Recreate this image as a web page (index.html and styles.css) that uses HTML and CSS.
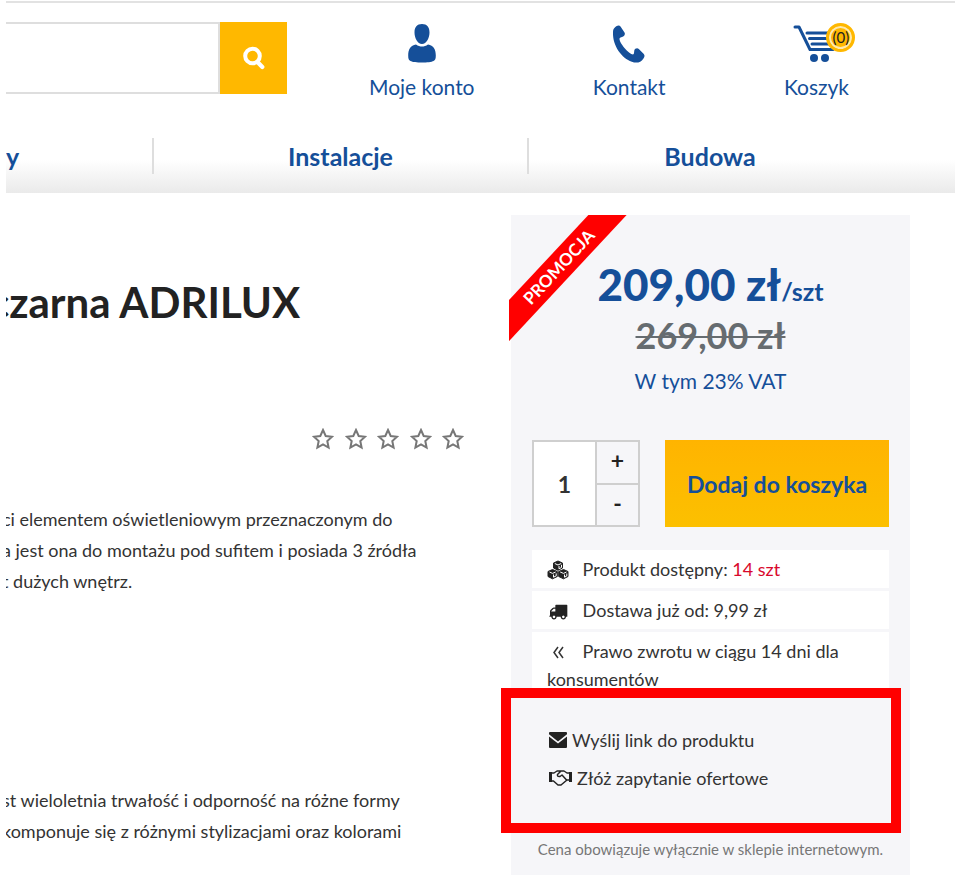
FILE: index.html
```html
<!DOCTYPE html>
<html lang="pl">
<head>
    <meta charset="UTF-8">
    <meta name="viewport" content="width=device-width, initial-scale=1">
    <title>ADRILUX</title>
    <link rel="stylesheet" href="styles.css">
</head>
<body>
<div class="page">
    <header class="header">
        <form class="search">
            <input class="search-input" type="text" aria-label="Szukaj">
            <button class="search-btn" type="button" aria-label="Szukaj">
                <svg viewBox="0 0 22 24" width="22" height="24"><circle cx="9.5" cy="10" r="7.3" fill="none" stroke="#fff" stroke-width="4"/><path d="M14.5 16l4.8 5" stroke="#fff" stroke-width="4.2" stroke-linecap="round"/></svg>
            </button>
        </form>
        <nav class="user-menu">
            <a href="#" class="user-link">
                <svg class="user-icon" viewBox="0 0 40 40" width="40" height="40"><path fill="#154f99" d="M20 0c5 0 7.500 3 7.500 8.500S24.500 20 20 20s-7.500-6-7.500-11.500S15 0 20 0zM14 20.500c2 1.400 4 2 6 2s4-.6 6-2c5.500.8 7.800 5 7.800 11 0 3.500-.6 4.700-2.300 5.500-3.500 2-19.500 2-23 0-1.700-.8-2.300-2-2.300-5.500 0-6 2.300-10.200 7.800-11z"/></svg>
                Moje konto
            </a>
            <a href="#" class="user-link">
                <svg class="user-icon" viewBox="0 0 40 40" width="40" height="40"><path fill="#154f99" d="M5 4.500C7 2 10 .5 11.500 2.500l4 6c.8 1.200.3 2.500-.6 3.500-1.400 1.400-4.200 1.200-4.400 2.500-.6 4 9.500 16 13.500 16 1.300 0 1-2.500 1.300-4 .4-2 3-3 4.500-1.500l5 5c1.300 1.500.7 3-.5 4.700-2.500 4-7 4.800-11.500 3C13 34.500 3.500 22 4 8.500c0-1.600.2-3 1-4z"/></svg>
                Kontakt
            </a>
            <a href="#" class="user-link">
                <svg class="user-icon" viewBox="0 0 40 40" width="40" height="40"><g fill="none" stroke="#154f99" stroke-width="3" stroke-linecap="round" stroke-linejoin="round"><path d="M-1 3h4l11 22.500h23M11 9h29M13.500 14.500h26M16 20h22"/></g><circle cx="18" cy="34" r="4" fill="#154f99"/><circle cx="29" cy="34" r="4" fill="#154f99"/></svg>
                Koszyk
                <span class="badge">(0)</span>
            </a>
        </nav>
    </header>

    <nav class="nav">
        <a href="#" class="nav-link nav-link-first">y</a>
        <a href="#" class="nav-link">Instalacje</a>
        <a href="#" class="nav-link">Budowa</a>
    </nav>

    <main class="product">
        <section class="info">
            <h1 class="title">czarna ADRILUX</h1>
            <div class="rating" role="img" aria-label="0 / 5">
                <svg class="star" viewBox="0 0 22 22"><path d="M11 2l2.700 6 6.300.7-4.700 4.300 1.300 6.500-5.600-3.200-5.600 3.200 1.300-6.500L2 8.700 8.300 8z"/></svg>
                <svg class="star" viewBox="0 0 22 22"><path d="M11 2l2.700 6 6.300.7-4.700 4.300 1.300 6.500-5.600-3.200-5.600 3.200 1.300-6.500L2 8.700 8.300 8z"/></svg>
                <svg class="star" viewBox="0 0 22 22"><path d="M11 2l2.700 6 6.300.7-4.700 4.300 1.300 6.500-5.600-3.200-5.600 3.200 1.300-6.500L2 8.700 8.300 8z"/></svg>
                <svg class="star" viewBox="0 0 22 22"><path d="M11 2l2.700 6 6.300.7-4.700 4.300 1.300 6.500-5.600-3.200-5.600 3.200 1.300-6.500L2 8.700 8.300 8z"/></svg>
                <svg class="star" viewBox="0 0 22 22"><path d="M11 2l2.700 6 6.300.7-4.700 4.300 1.300 6.500-5.600-3.200-5.600 3.200 1.300-6.500L2 8.700 8.300 8z"/></svg>
            </div>
            <p class="desc">ci elementem oświetleniowym przeznaczonym do<br>a jest ona do montażu pod sufitem i posiada 3 źródła<br>t dużych wnętrz.</p>
            <p class="desc">st wieloletnia trwałość i odporność na różne formy<br>komponuje się z różnymi stylizacjami oraz kolorami</p>
        </section>

        <aside class="buy">
            <div class="ribbon"><span class="ribbon-text">PROMOCJA</span></div>
            <div class="price">209,00 zł<span class="price-unit">/szt</span></div>
            <del class="price-old">269,00 zł</del>
            <div class="vat">W tym 23% VAT</div>

            <form class="cart">
                <div class="qty">
                    <input class="qty-input" type="text" value="1" aria-label="Ilość">
                    <div class="qty-btns">
                        <button class="qty-btn" type="button">+</button>
                        <button class="qty-btn" type="button">-</button>
                    </div>
                </div>
                <button class="cart-btn" type="button">Dodaj do koszyka</button>
            </form>

            <ul class="facts">
                <li class="fact">
                    <svg class="fact-icon" viewBox="0 0 22 20" width="22" height="20"><g fill="#222" stroke="#222" stroke-linejoin="round"><path d="M11 1l4.500 2v5L11 10.300 6.500 8V3zM5.500 9.500l4.800 2v5l-4.800 2.300L1 16.500v-5zM16.500 9.500l4.500 2v5l-4.500 2.300-4.800-2.300v-5z"/></g><g fill="none" stroke="#fff"><path d="M7.800 3.500L11 5l3.200-1.500M12 6v2.800l2.500-1.300V4.800M2.500 12l3 1.400L8.700 12M6.500 14.500v2.700l2.700-1.300v-2.500M13.200 12l3.300 1.400 3-1.400M17.500 14.500v2.700l2.300-1.200v-2.500"/></g></svg>
                    Produkt dostępny: <span class="stock">14 szt</span>
                </li>
                <li class="fact">
                    <svg class="fact-icon" viewBox="0 0 2112 1792" width="22" height="19"><path transform="translate(160 0)" fill="#222" d="M640 1408q0-52-38-90t-90-38-90 38-38 90 38 90 90 38 90-38 38-90zm-384-512h384v-256h-158q-13 0-22 9l-195 195q-9 9-9 22v30zm1280 512q0-52-38-90t-90-38-90 38-38 90 38 90 90 38 90-38 38-90zm256-1088v1024q0 15-4 26.500t-13.500 18.500-16.500 11.500-23.500 6-22.500 2-25.500 0-22.500-.5q0 106-75 181t-181 75-181-75-75-181h-384q0 106-75 181t-181 75-181-75-75-181h-64q-3 0-22.500.5t-25.500 0-22.500-2-23.500-6-16.500-11.500-13.500-18.500-4-26.500q0-26 19-45t45-19v-320q0-8-.5-35t0-38 2.500-34.500 6.500-37 14-30.500 22.500-30l198-198q19-19 50.500-32t58.500-13h160v-192q0-26 19-45t45-19h1024q26 0 45 19t19 45z"/></svg>
                    Dostawa już od: 9,99 zł
                </li>
                <li class="fact">
                    <svg class="fact-icon" viewBox="0 0 22 20" width="22" height="20"><path d="M11 5l-4 5.500 4 5.500M16 5l-4 5.500 4 5.500" fill="none" stroke="#333" stroke-width="1.500"/></svg>
                    Prawo zwrotu w ciągu 14 dni dla konsumentów
                </li>
            </ul>

            <div class="actions">
                <a href="#" class="action">
                    <svg viewBox="0 0 18 16" width="18" height="16"><path fill="#222" d="M1 0h16q1 0 1 1v1.200L9 9.500 0 2.200V1q0-1 1-1zM0 4.500l9 7 9-7V15q0 1-1 1H1q-1 0-1-1z"/></svg>
                    Wyślij link do produktu
                </a>
                <a href="#" class="action">
                    <svg viewBox="0 0 23 18" width="23" height="18"><path fill="#222" d="M0 3h3v10H0zM20 3h3v10h-3z"/><path fill="none" stroke="#222" stroke-width="1.500" stroke-linejoin="round" d="M3 4h2l3-2h4M3 12h1.500l4.500 4h3l6-5h2M20 4h-2l-3-2h-3L8.500 5.500Q8 8 11 7.500L13 6l5 5.500"/></svg>
                    Złóż zapytanie ofertowe
                </a>
            </div>
            <p class="note">Cena obowiązuje wyłącznie w sklepie internetowym.</p>
        </aside>
    </main>
</div>
</body>
</html>
```
FILE: styles.css
```css
* {
    box-sizing: border-box;
}
body {
    margin: 0;
    background: #fff;
    color: #333;
    font-family: Lato, "Liberation Sans", sans-serif;
    font-size: 18px;
}
a {
    color: inherit;
    text-decoration: none;
}
button,
input {
    margin: 0;
    border-radius: 0;
    font-family: inherit;
}
.page {
    margin: 1px 0 0 6px;
    border-top: 2px solid #e2e2e2;
    overflow: hidden;
}

/* header */
.header {
    display: flex;
    padding-top: 19px;
}
.search {
    display: flex;
    flex: 0 0 281px;
    min-width: 0;
    height: 72px;
}
.search-input {
    flex: 1;
    width: 0;
    min-width: 0;
    border: 2px solid #dedede;
    border-left: 0;
    padding: 0 16px;
    font-size: 18px;
}
.search-btn {
    display: flex;
    flex: 0 0 67px;
    align-items: center;
    justify-content: center;
    border: 0;
    padding: 0;
    background: #ffb800;
}
.user-menu {
    display: flex;
    flex: 1;
    justify-content: space-between;
    padding: 2px 106px 0 82px;
}
.user-link {
    display: flex;
    position: relative;
    flex-direction: column;
    align-items: center;
    color: #154f99;
    font-size: 21px;
    line-height: 28px;
}
.user-icon {
    margin-bottom: 9px;
    overflow: visible;
}
.badge {
    position: absolute;
    top: -1px;
    left: 50%;
    width: 29px;
    height: 29px;
    margin-left: 10px;
    border: 3px solid #ffb800;
    border-radius: 50%;
    background: #ffb800;
    box-shadow: inset 0 0 0 2px #ffe9ae;
    color: #222;
    font-size: 15px;
    line-height: 23px;
    text-align: center;
}

/* navigation */
.nav {
    display: grid;
    grid-template-columns: 148fr 375fr 362fr 64fr;
    margin-top: 18px;
    padding: 19px 0;
    background: linear-gradient(#fff 55%, #eaeaea);
}
.nav-link {
    border-right: 2px solid #dedede;
    color: #154f99;
    font-size: 25px;
    font-weight: bold;
    line-height: 36px;
    text-align: center;
}
.nav-link-first {
    text-align: left;
}
.nav-link:last-child {
    border-right: 0;
}

/* product */
.product {
    display: grid;
    grid-template-columns: 1fr 399px;
    padding: 22px 45px 0 0;
}
.title {
    margin: 59px 0 98px -17px;
    color: #222;
    font-size: 42px;
    font-weight: bold;
    line-height: 56px;
}
.rating {
    display: flex;
    justify-content: space-between;
    width: 152px;
    margin: 0 47px 54px auto;
}
.star {
    width: 22px;
    height: 22px;
    fill: none;
    stroke: #777;
    stroke-width: 2;
}
.desc {
    margin: 0 0 188px -4px;
    line-height: 31px;
    white-space: nowrap;
}
.desc:last-child {
    margin-bottom: 0;
}
.buy {
    position: relative;
    padding: 42px 21px 16px;
    background: #f6f6f9;
    text-align: center;
}
.ribbon {
    position: absolute;
    top: 0;
    left: -2px;
    width: 118px;
    height: 126px;
    overflow: hidden;
}
.ribbon-text {
    position: absolute;
    top: 38px;
    left: -50px;
    width: 200px;
    background: #f00;
    color: #fff;
    font-size: 17px;
    font-weight: bold;
    line-height: 28px;
    transform: rotate(-47deg);
}
.price {
    color: #154f99;
    font-size: 44px;
    font-weight: 900;
    line-height: 54px;
}
.price-unit {
    font-size: 25px;
    font-weight: bold;
    line-height: 1;
}
.price-old {
    display: block;
    color: #666c70;
    font-size: 36px;
    font-weight: bold;
    line-height: 48px;
    text-decoration-thickness: 2px;
}
.vat {
    color: #154f99;
    font-size: 21px;
    line-height: 44px;
}
.cart {
    display: flex;
    gap: 25px;
    height: 87px;
    margin: 37px 0 23px;
}
.qty {
    display: flex;
    width: 108px;
    border: 2px solid #cfcfcf;
}
.qty-input {
    width: 61px;
    border: 0;
    padding: 0;
    color: #333;
    font-size: 23px;
    font-weight: bold;
    text-align: center;
}
.qty-btns {
    display: flex;
    flex: 1;
    flex-direction: column;
    gap: 2px;
    padding-left: 2px;
    background: #cfcfcf;
}
.qty-btn {
    flex: 1;
    border: 0;
    padding: 0 0 4px;
    background: #f6f6f9;
    color: #222;
    font-size: 23px;
    font-weight: bold;
}
.cart-btn {
    flex: 1;
    border: 0;
    padding: 0;
    background: linear-gradient(#ffb400, #fcc000);
    color: #154f99;
    font-size: 23px;
    font-weight: bold;
}
.facts {
    display: grid;
    gap: 3px;
    margin: 0;
    padding: 0;
    list-style: none;
    text-align: left;
}
.fact {
    padding: 5px 15px;
    background: #fff;
    line-height: 28px;
}
.fact-icon {
    margin-right: 9px;
    vertical-align: -4px;
}
.stock {
    color: #d9082c;
}

/* highlighted links */
.actions {
    position: relative;
    border-bottom: 1px solid #ccc;
    padding: 23px 17px 26px;
    text-align: left;
}
.actions::before {
    content: '';
    position: absolute;
    top: -10px;
    right: -12px;
    bottom: -10px;
    left: -31px;
    border: 10px solid #f00;
    pointer-events: none;
}
.action {
    display: flex;
    align-items: center;
    gap: 5px;
    line-height: 38px;
}
.note {
    margin: 13px 0 0;
    color: #777;
    font-size: 15px;
    line-height: 24px;
    white-space: nowrap;
}
```
